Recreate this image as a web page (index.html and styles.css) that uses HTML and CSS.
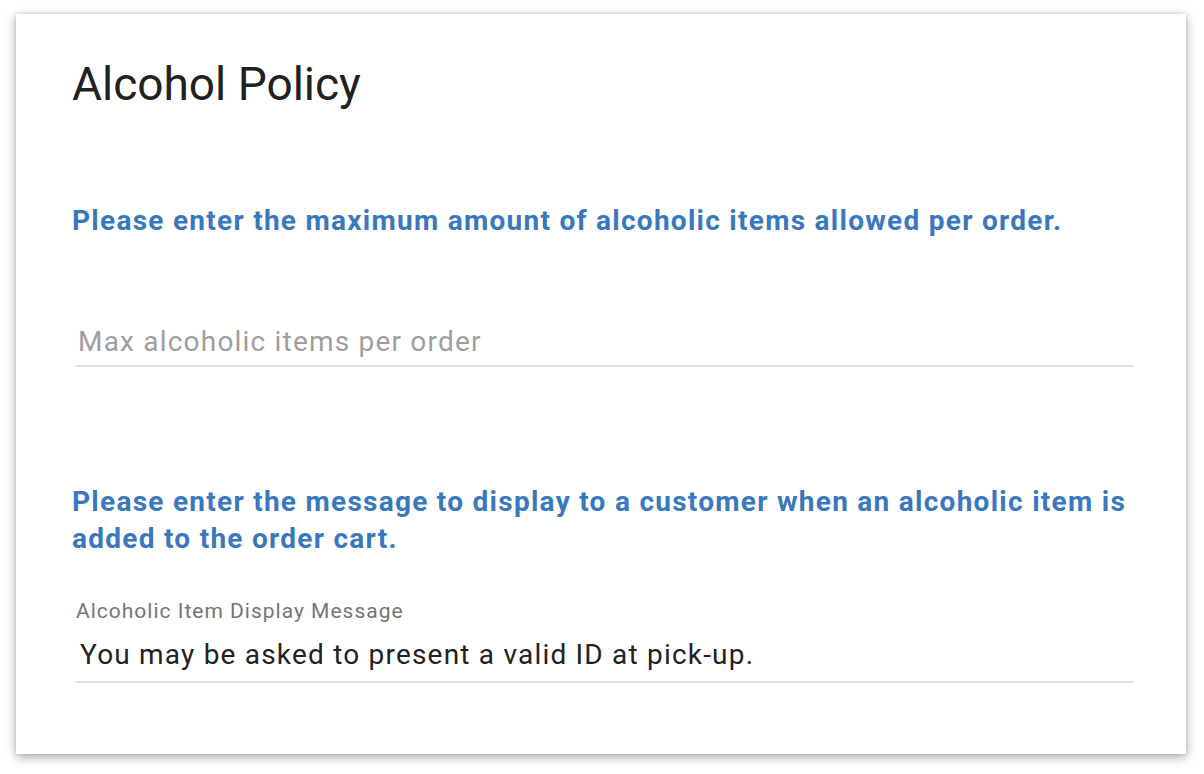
FILE: index.html
```html
<!DOCTYPE html>
<html>
<head>
<meta charset="utf-8">
<link rel="stylesheet" href="styles.css">
</head>
<body>
<div class="card">
  <h1 class="title">Alcohol Policy</h1>
  <h2 class="prompt prompt-first">Please enter the maximum amount of alcoholic items allowed per order.</h2>
  <div class="field field-empty">
    <div class="placeholder">Max alcoholic items per order</div>
  </div>
  <h2 class="prompt prompt-second">Please enter the message to display to a customer when an alcoholic item is added to the order cart.</h2>
  <div class="field field-filled">
    <div class="label">Alcoholic Item Display Message</div>
    <div class="value">You may be asked to present a valid ID at pick-up.</div>
  </div>
</div>
</body>
</html>
```

FILE: styles.css
```css
html, body {
  margin: 0;
  padding: 0;
  background: #ffffff;
}
body {
  font-family: Roboto, "Noto Sans", sans-serif;
  padding: 14px 18px 20px 16px;
}
.card {
  width: 1170px;
  height: 740px;
  box-sizing: border-box;
  background: #ffffff;
  box-shadow: 0 3px 10px rgba(0,0,0,0.35), 0 0 3px rgba(0,0,0,0.12);
  padding: 0 52px 0 56px;
  display: flex;
  flex-direction: column;
}
.title {
  margin: 40px 0 0 0;
  font-size: 46px;
  font-weight: 400;
  line-height: 60px;
  color: #212121;
}
.prompt {
  margin: 0;
  font-size: 28px;
  font-weight: 700;
  line-height: 37px;
  letter-spacing: 1.27px;
  color: #3a78bd;
}
.prompt-first {
  margin-top: 88px;
}
.prompt-second {
  margin-top: 116px;
}
.field {
  margin-left: 4px;
  border-bottom: 2px solid #e0e0e0;
}
.field-empty {
  margin-top: 85px;
}
.placeholder {
  font-size: 28px;
  line-height: 36px;
  letter-spacing: 1.2px;
  color: #9e9e9e;
  padding: 0 0 5px 2px;
}
.field-filled {
  margin-top: 41px;
}
.label {
  font-size: 21px;
  line-height: 26px;
  letter-spacing: 1px;
  color: #757575;
}
.value {
  font-size: 28px;
  line-height: 36px;
  letter-spacing: 1.2px;
  color: #212121;
  padding: 13px 0 8px 4px;
}
```
